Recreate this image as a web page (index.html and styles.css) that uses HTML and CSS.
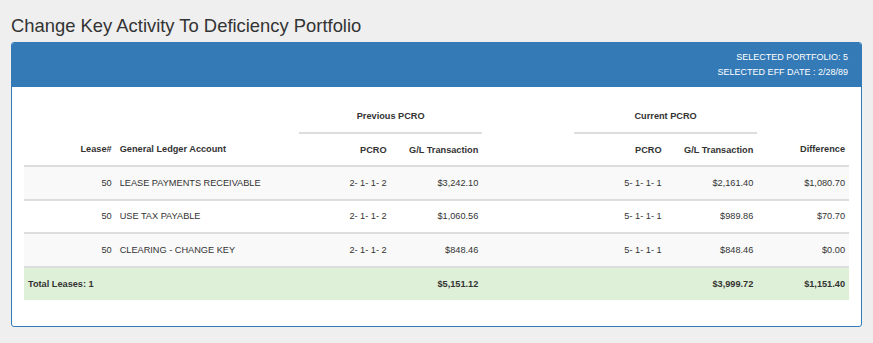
FILE: index.html
```html
<!DOCTYPE html>
<html>
<head>
<meta charset="utf-8">
<title>Change Key Activity To Deficiency Portfolio</title>
<link rel="stylesheet" href="styles.css">
</head>
<body>
<div class="page">
  <h1 class="title">Change Key Activity To Deficiency Portfolio</h1>
  <div class="panel">
    <div class="panel-heading">
      <div>SELECTED PORTFOLIO: 5</div>
      <div>SELECTED EFF DATE : 2/28/89</div>
    </div>
    <div class="panel-body">
      <table class="grid">
        <colgroup>
          <col class="unit">
          <col class="double">
          <col class="unit">
          <col class="unit">
          <col class="unit">
          <col class="unit">
          <col class="unit">
          <col class="unit">
        </colgroup>
        <thead>
          <tr class="group-row">
            <th colspan="2"></th>
            <th colspan="2" class="group">Previous PCRO</th>
            <th></th>
            <th colspan="2" class="group">Current PCRO</th>
            <th></th>
          </tr>
          <tr class="col-row">
            <th class="num">Lease#</th>
            <th class="txt">General Ledger Account</th>
            <th class="num">PCRO</th>
            <th class="num">G/L Transaction</th>
            <th></th>
            <th class="num">PCRO</th>
            <th class="num">G/L Transaction</th>
            <th class="num">Difference</th>
          </tr>
        </thead>
        <tbody>
          <tr class="odd">
            <td class="num">50</td>
            <td class="txt">LEASE PAYMENTS RECEIVABLE</td>
            <td class="num">2- 1- 1- 2</td>
            <td class="num">$3,242.10</td>
            <td></td>
            <td class="num">5- 1- 1- 1</td>
            <td class="num">$2,161.40</td>
            <td class="num">$1,080.70</td>
          </tr>
          <tr>
            <td class="num">50</td>
            <td class="txt">USE TAX PAYABLE</td>
            <td class="num">2- 1- 1- 2</td>
            <td class="num">$1,060.56</td>
            <td></td>
            <td class="num">5- 1- 1- 1</td>
            <td class="num">$989.86</td>
            <td class="num">$70.70</td>
          </tr>
          <tr class="odd">
            <td class="num">50</td>
            <td class="txt">CLEARING - CHANGE KEY</td>
            <td class="num">2- 1- 1- 2</td>
            <td class="num">$848.46</td>
            <td></td>
            <td class="num">5- 1- 1- 1</td>
            <td class="num">$848.46</td>
            <td class="num">$0.00</td>
          </tr>
        </tbody>
        <tfoot>
          <tr class="total">
            <td colspan="2" class="txt">Total Leases: 1</td>
            <td></td>
            <td class="num">$5,151.12</td>
            <td></td>
            <td></td>
            <td class="num">$3,999.72</td>
            <td class="num">$1,151.40</td>
          </tr>
        </tfoot>
      </table>
    </div>
  </div>
</div>
</body>
</html>
```
FILE: styles.css
```css
html, body {
  margin: 0;
  padding: 0;
  background: #efefef;
}

body {
  font-family: "Liberation Sans", Arial, sans-serif;
  color: #333;
}

.page {
  padding: 16px 11px 0 11px;
}

.title {
  margin: 0 0 6px 0;
  font-size: 18.4px;
  font-weight: normal;
  line-height: 20px;
  color: #333;
}

.panel {
  background: #fff;
  border: 1px solid #337ab7;
  border-radius: 3px;
  overflow: hidden;
}

.panel-heading {
  background: #337ab7;
  color: #fff;
  font-size: 9px;
  line-height: 15px;
  text-align: right;
  padding: 7px 13px 7px 13px;
  height: 30px;
}

.panel-body {
  padding: 13px 12px 26px 12px;
}

.grid {
  width: 100%;
  table-layout: fixed;
  border-collapse: collapse;
  font-size: 9.2px;
  line-height: 12px;
}

.grid col.unit { width: 11.111%; }
.grid col.double { width: 22.222%; }

.grid th,
.grid td {
  box-sizing: border-box;
  padding: 0 4px;
  vertical-align: middle;
  white-space: nowrap;
}

.grid th {
  font-weight: bold;
}

.grid .num { text-align: right; }
.grid .txt { text-align: left; }

.group-row th {
  height: 33px;
  text-align: center;
}

.group-row th.group {
  border-bottom: 2px solid #ddd;
}

.col-row th {
  height: 33px;
  border-bottom: 2px solid #ddd;
}

.grid tbody td,
.grid tfoot td {
  height: 33.5px;
  border-top: 2px solid #ddd;
}

.grid tbody tr.odd td {
  background: #f9f9f9;
}

.grid tfoot tr.total td {
  background: #dff0d8;
  font-weight: bold;
}
```
